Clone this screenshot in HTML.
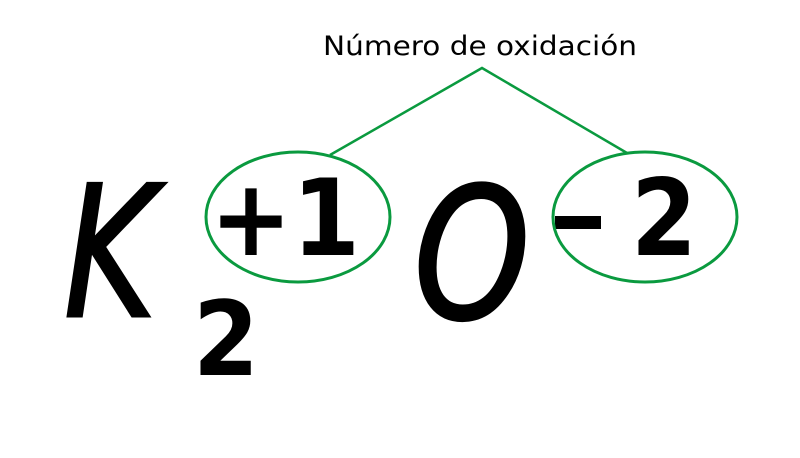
<!DOCTYPE html>
<html><head><meta charset="utf-8"><style>
html,body{margin:0;padding:0;background:#fff;width:800px;height:458px;overflow:hidden}
</style></head><body>
<svg width="800" height="458" viewBox="0 0 800 458" xmlns="http://www.w3.org/2000/svg">
<rect width="800" height="458" fill="#fff"/>
<text x="480" y="55" text-anchor="middle" font-family="DejaVu Sans, Liberation Sans, sans-serif" font-size="27" fill="#000" textLength="314" lengthAdjust="spacingAndGlyphs">Número de oxidación</text>
<polyline points="330,155 482,68 627,153" fill="none" stroke="#0a9a3f" stroke-width="2.5"/>
<text x="64" y="316" font-family="DejaVu Sans, sans-serif" font-style="oblique" font-size="182" fill="#000" stroke="#000" stroke-width="3" textLength="92" lengthAdjust="spacingAndGlyphs">K</text>
<text x="414" y="318" font-family="DejaVu Sans, sans-serif" font-style="oblique" font-size="182" fill="#000" stroke="#000" stroke-width="3" textLength="116" lengthAdjust="spacingAndGlyphs">O</text>
<text x="193" y="375" font-family="DejaVu Sans, sans-serif" font-weight="bold" font-size="103" fill="#000" textLength="66" lengthAdjust="spacingAndGlyphs">2</text>
<text x="210" y="255" font-family="DejaVu Sans, sans-serif" font-weight="bold" font-size="106" fill="#000" textLength="150" lengthAdjust="spacingAndGlyphs">+1</text>
<rect x="555" y="216" width="46" height="13" fill="#000"/>
<text x="631" y="255" font-family="DejaVu Sans, sans-serif" font-weight="bold" font-size="106" fill="#000" textLength="66" lengthAdjust="spacingAndGlyphs">2</text>
<ellipse cx="298" cy="217" rx="92" ry="65" fill="none" stroke="#0a9a3f" stroke-width="3"/>
<ellipse cx="645" cy="217" rx="92" ry="65" fill="none" stroke="#0a9a3f" stroke-width="3"/>
</svg>
</body></html>
